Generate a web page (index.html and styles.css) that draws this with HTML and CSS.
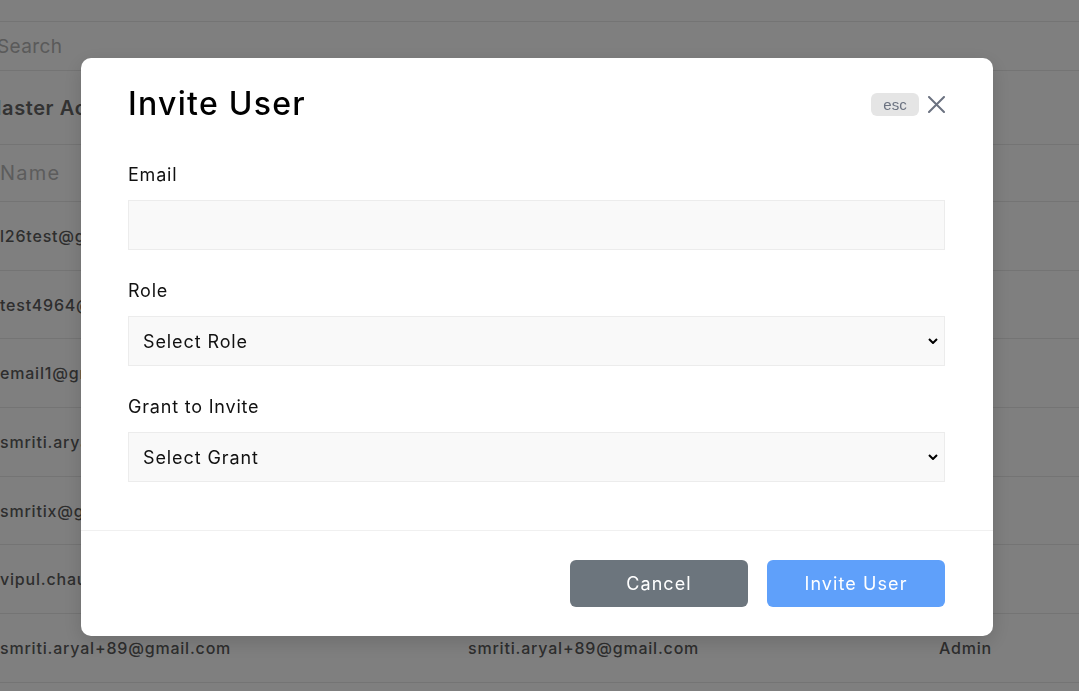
FILE: index.html
```html
<!DOCTYPE html>
<html lang="en">
<head>
<meta charset="utf-8">
<title>Invite User</title>
<link rel="stylesheet" href="styles.css">
</head>
<body>
<div class="page">
  <div class="topbar"></div>
  <div class="search-row"><span class="search">Search</span></div>
  <div class="title-row"><span class="page-title">Master Accounts</span></div>
  <div class="table">
    <div class="thead row-head">
      <span class="th">Name</span><span class="th">Email</span><span class="th">Role</span>
    </div>
    <div class="tr"><span class="td">l26test@gmail.com</span><span class="td">l26test@gmail.com</span><span class="td">Admin</span></div>
    <div class="tr"><span class="td">test4964@gmail.com</span><span class="td">test4964@gmail.com</span><span class="td">Admin</span></div>
    <div class="tr"><span class="td">email1@gmail.com</span><span class="td">email1@gmail.com</span><span class="td">Admin</span></div>
    <div class="tr"><span class="td">smriti.aryal@gmail.com</span><span class="td">smriti.aryal@gmail.com</span><span class="td">Admin</span></div>
    <div class="tr"><span class="td">smritix@gmail.com</span><span class="td">smritix@gmail.com</span><span class="td">Admin</span></div>
    <div class="tr"><span class="td">vipul.chaudhary@gmail.com</span><span class="td">vipul.chaudhary@gmail.com</span><span class="td">Admin</span></div>
    <div class="tr"><span class="td">smriti.aryal+89@gmail.com</span><span class="td">smriti.aryal+89@gmail.com</span><span class="td">Admin</span></div>
  </div>
</div>

<div class="overlay">
  <div class="modal" role="dialog" aria-label="Invite User">
    <div class="modal-header">
      <h2 class="modal-title">Invite User</h2>
      <div class="header-actions">
        <span class="esc">esc</span>
        <button class="close" aria-label="Close">
          <svg width="17" height="17" viewBox="0 0 17 17"><path d="M1 1 L16 16 M16 1 L1 16" stroke="#6b7280" stroke-width="2" stroke-linecap="round" fill="none"/></svg>
        </button>
      </div>
    </div>
    <div class="modal-body">
      <div class="field">
        <label class="label">Email</label>
        <input class="input" type="email">
      </div>
      <div class="field">
        <label class="label">Role</label>
        <select class="input select"><option>Select Role</option></select>
      </div>
      <div class="field last">
        <label class="label">Grant to Invite</label>
        <select class="input select"><option>Select Grant</option></select>
      </div>
    </div>
    <div class="modal-footer">
      <button class="btn btn-cancel">Cancel</button>
      <button class="btn btn-primary">Invite User</button>
    </div>
  </div>
</div>
</body>
</html>
```

FILE: styles.css
```css
* { box-sizing: border-box; }
html, body { margin: 0; padding: 0; }
body {
  font-family: "Inter", "Noto Sans", sans-serif;
  letter-spacing: 0.05em;
  background: #fff;
  width: 1079px;
  height: 691px;
  overflow: hidden;
}

/* background page */
.page { width: 1079px; }
.topbar { height: 22px; border-bottom: 1px solid #e8e8e8; }
.search-row {
  height: 49px;
  border-bottom: 1px solid #e8e8e8;
  display: flex;
  align-items: center;
}
.search { font-size: 19px; color: #b4b4b4; margin-left: -3px; letter-spacing: 0.02em; }
.title-row {
  height: 74px;
  border-bottom: 1px solid #e8e8e8;
  display: flex;
  align-items: center;
}
.page-title { font-size: 20px; font-weight: 600; color: #666; margin-left: -17px; letter-spacing: 0.03em; }
.table { display: flex; flex-direction: column; }
.thead, .tr {
  display: grid;
  grid-template-columns: 468px 471px 1fr;
  align-items: center;
  border-bottom: 1px solid #e8e8e8;
}
.thead { height: 57px; }
.tr { height: 68.7px; }
.th { font-size: 20px; color: #b9b9b9; letter-spacing: 0.06em; }
.td { font-size: 16px; font-weight: 500; color: #5c5c5c; }

/* overlay + modal */
.overlay {
  position: fixed;
  inset: 0;
  background: rgba(0, 0, 0, 0.5);
  display: flex;
  align-items: flex-start;
  padding: 58px 0 0 81px;
}
.modal {
  width: 912px;
  background: #fff;
  border-radius: 10px;
  box-shadow: 0 6px 20px rgba(0,0,0,0.15);
  display: flex;
  flex-direction: column;
}
.modal-header {
  display: flex;
  justify-content: space-between;
  align-items: center;
  padding: 26px 48px 0 47px;
}
.modal-title {
  margin: 0;
  font-size: 32px;
  line-height: 40px;
  font-weight: 500;
  letter-spacing: 0.04em;
  color: #000;
}
.header-actions { display: flex; align-items: center; gap: 9px; }
.esc {
  display: inline-flex;
  align-items: center;
  justify-content: center;
  width: 48px;
  height: 23px;
  border-radius: 6px;
  background: #e5e5e5;
  color: #6b7280;
  font-family: "Liberation Sans", Arial, sans-serif;
  font-size: 15px;
  letter-spacing: 0;
}
.close {
  border: 0;
  background: none;
  padding: 0;
  width: 17px;
  height: 17px;
  display: flex;
}
.modal-body { padding: 37px 48px 48px 47px; }
.field { display: flex; flex-direction: column; margin-bottom: 27px; }
.field.last { margin-bottom: 0; }
.label {
  font-size: 18px;
  line-height: 28px;
  color: #111;
  margin-bottom: 11px;
}
.input {
  height: 50px;
  width: 100%;
  border: 1px solid #ececec;
  background: #f9f9f9;
  border-radius: 0;
  font-family: inherit;
  letter-spacing: 0.05em;
  font-size: 18px;
  color: #111;
  padding: 0 14px;
  outline: none;
}
.select {
  appearance: none;
  -webkit-appearance: none;
  background-image: url("data:image/svg+xml;utf8,<svg xmlns='http://www.w3.org/2000/svg' width='10' height='6' viewBox='0 0 10 6'><path d='M1 1 L5 5 L9 1' stroke='black' stroke-width='2' fill='none'/></svg>");
  background-repeat: no-repeat;
  background-position: right 6px center;
  background-size: 10px 6px;
}
.modal-footer {
  border-top: 1px solid #f0f0f0;
  display: flex;
  justify-content: flex-end;
  gap: 19px;
  padding: 29px 48px 29px 47px;
}
.btn {
  width: 178px;
  height: 47px;
  border: 0;
  border-radius: 6px;
  color: #fff;
  font-family: inherit;
  letter-spacing: 0.06em;
  font-size: 18px;
}
.btn-cancel { background: #6c757d; }
.btn-primary { background: #5fa0fa; }
```
